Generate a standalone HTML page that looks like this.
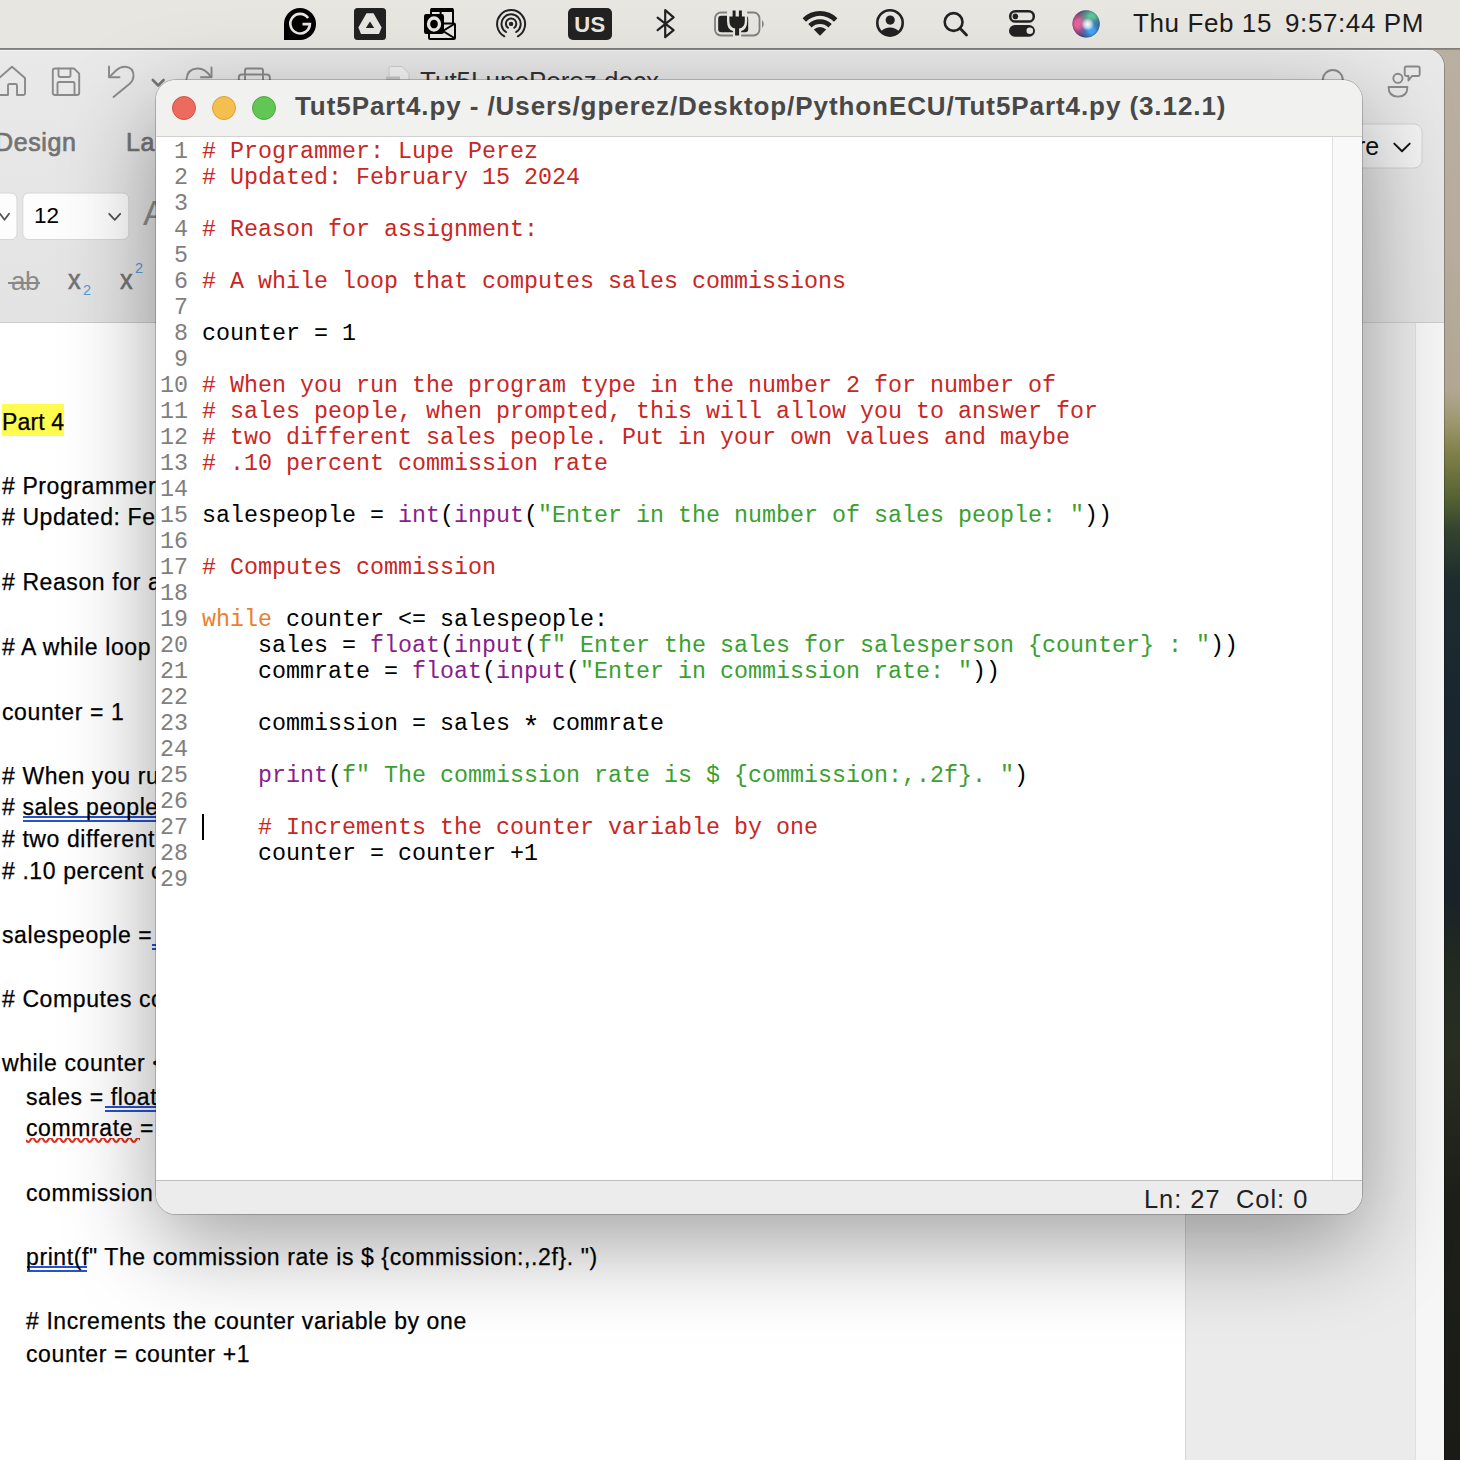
<!DOCTYPE html>
<html><head><meta charset="utf-8">
<style>
html,body{margin:0;padding:0;}
body{width:1460px;height:1460px;overflow:hidden;position:relative;background:#1f2b2c;font-family:"Liberation Sans",sans-serif;}
.a{position:absolute;}
#wall{left:1400px;top:0;width:60px;height:1460px;background:linear-gradient(to bottom,#bab0a2 0px,#b8ad9e 250px,#b2a894 390px,#a09a72 420px,#7f8048 455px,#5a6535 495px,#34442f 530px,#1f2d2e 580px,#1b2730 700px,#1a2329 900px,#222a22 960px,#2a2f22 1050px,#1d1f1a 1200px,#1a1b17 1460px);}
#menubar{left:0;top:0;width:1460px;height:48px;background:#e8e6e1;border-bottom:1px solid #7f7e7a;}
#word{left:-30px;top:49px;width:1474px;height:1411px;background:#fff;border-top-right-radius:18px;overflow:hidden;box-shadow:1px 0 0 rgba(0,0,0,0.22);}
#tb{left:0;top:0;width:1474px;height:273px;background:linear-gradient(to bottom,#e9e9e9,#e3e3e3);border-bottom:1px solid #cdcdcd;}
#docbg{left:1215px;top:274px;width:230px;height:1140px;background:#ebebeb;border-left:1px solid #d4d4d4;}
#docstrip{left:1445px;top:274px;width:29px;height:1140px;background:#f6f6f6;border-left:1px solid #e0e0e0;}
#idle{left:156px;top:80px;width:1206px;height:1134px;border-radius:20px;overflow:hidden;background:#fff;box-shadow:0 0 0 1px rgba(0,0,0,0.2),0 30px 92px rgba(0,0,0,0.37);}
#title{left:0;top:0;width:1206px;height:56px;background:#f1f1f0;border-bottom:1px solid #d2d2d2;}
#code{left:0;top:57px;width:1176px;height:1043px;background:#fff;}
#sbar{left:1176px;top:57px;width:29px;height:1043px;background:#f9f9f9;border-left:1px solid #e2e2e2;}
#status{left:0;top:1100px;width:1206px;height:34px;background:#ececec;border-top:1px solid #bdbdbd;}
.tl{width:22px;height:22px;border-radius:50%;border:1px solid;}
.dl{font-size:23px;line-height:30px;color:#000;white-space:pre;letter-spacing:0.6px;-webkit-text-stroke:0.25px #000;}
.mono{font-family:"Liberation Mono",monospace;font-size:23.33px;line-height:26px;white-space:pre;}
.ln{color:#7f7f7f;}
.c{color:#c9271f;}
.k{color:#ec7f2c;}
.b{color:#8b1d8c;}
.s{color:#3aa02e;}
</style></head><body>
<div id="wall" class="a"></div>
<div id="menubar" class="a">
<svg class="a" style="left:0;top:0;" width="1460" height="48" viewBox="0 0 1460 48">
 <!-- Grammarly -->
 <path d="M284,24 A16,16 0 1 1 300,40 L284,40 Z" fill="#000"/>
 <path d="M308.1,18 A9.8,9.8 0 1 0 309.9,24.1 L302.5,24.1" fill="none" stroke="#e8e6e1" stroke-width="2.6"/>
 <!-- Drive -->
 <rect x="354" y="8" width="32" height="32" rx="3.5" fill="#222"/>
 <path d="M366.5,13.3 L373.5,13.3 L381.6,27.5 L379,34 L361,34 L358.4,27.5 Z" fill="#e8e6e1"/>
 <path d="M370,21.5 L374.2,28 L365.8,28 Z" fill="#222"/>
 <!-- Outlook -->
 <rect x="431" y="9" width="22" height="17" rx="1.2" fill="none" stroke="#000" stroke-width="2"/>
 <rect x="431" y="8" width="22" height="4" fill="#000"/>
 <line x1="440.6" y1="12" x2="440.6" y2="20" stroke="#000" stroke-width="2"/>
 <rect x="429" y="23.5" width="26" height="15.5" rx="1.2" fill="#e8e6e1" stroke="#000" stroke-width="2"/>
 <path d="M455,23.5 L443,31 L455,38.5" fill="none" stroke="#000" stroke-width="2"/>
 <rect x="424" y="14" width="20" height="20" rx="2.2" fill="#000"/>
 <ellipse cx="434" cy="24" rx="5.5" ry="6.0" fill="none" stroke="#e8e6e1" stroke-width="3.3"/>
 <!-- AirDrop -->
 <g fill="none" stroke="#222" stroke-width="2.0" stroke-linecap="round">
  <path d="M504.3,36.3 A14,14 0 1 1 517.9,36.3"/>
  <path d="M506,32 A9.6,9.6 0 1 1 516.2,32"/>
  <path d="M507.9,27.8 A5.2,5.2 0 1 1 514.3,27.8"/>
 </g>
 <circle cx="511.1" cy="23.9" r="2.2" fill="#222"/>
 <!-- US -->
 <rect x="568" y="8" width="44" height="32" rx="5" fill="#222"/>
 <text x="590" y="32.3" text-anchor="middle" font-family="Liberation Sans" font-weight="bold" font-size="22" fill="#e8e6e1" letter-spacing="0.5">US</text>
 <!-- Bluetooth -->
 <path d="M657.6,17.6 L673.6,30.2 L665.2,37.2 L665.2,10.2 L673.6,17.4 L657.6,30.2" fill="none" stroke="#222" stroke-width="2.2" stroke-linejoin="round" stroke-linecap="round"/>
 <!-- Battery -->
 <rect x="715" y="12.5" width="44.5" height="23" rx="6" fill="none" stroke="#808080" stroke-width="1.8"/>
 <path d="M762,20 Q765.5,24 762,28 Z" fill="#808080"/>
 <rect x="718.2" y="15.8" width="30" height="16.5" rx="3" fill="#222"/>
 <path d="M727,10 L747.2,10 L747.2,21 Q747.2,29.5 741.2,31 L741.2,37.5 L733,37.5 L733,31 Q727,29.5 727,21 Z" fill="#e8e6e1"/>
 <path d="M732.6,10.5 L735.6,10.5 L735.6,16.4 L738.9,16.4 L738.9,10.5 L741.9,10.5 L741.9,16.4 L744.8,16.4 L744.8,21 Q744.8,27.6 739.1,28.6 L739.1,35.6 L735.1,35.6 L735.1,28.6 Q729.4,27.6 729.4,21 L729.4,16.4 L732.6,16.4 Z" fill="#222"/>
 <!-- WiFi -->
 <path d="M802.6,18.2 A24.6,24.6 0 0 1 837.4,18.2 L834,21.7 A19.7,19.7 0 0 0 806,21.7 Z" fill="#222"/>
 <path d="M808.2,24 A16.8,16.8 0 0 1 831.8,24 L828.4,27.5 A11.9,11.9 0 0 0 811.6,27.5 Z" fill="#222"/>
 <path d="M813.8,29.6 A8.8,8.8 0 0 1 826.2,29.6 L820,35.8 Z" fill="#222"/>
 <!-- User -->
 <circle cx="890" cy="22.9" r="12.7" fill="none" stroke="#222" stroke-width="2.6"/>
 <circle cx="890.2" cy="20.1" r="4.6" fill="#222"/>
 <path d="M880.6,31.7 Q885,27.5 890,27.5 Q895,27.5 899.4,31.7 A12.7,12.7 0 0 1 880.6,31.7 Z" fill="#222"/>
 <!-- Search -->
 <circle cx="953.6" cy="22" r="8.9" fill="none" stroke="#222" stroke-width="2.6"/>
 <line x1="960.2" y1="28.6" x2="966.5" y2="35" stroke="#222" stroke-width="2.8" stroke-linecap="round"/>
 <!-- Control Center -->
 <rect x="1010.2" y="11.2" width="23.6" height="10.4" rx="5.2" fill="none" stroke="#222" stroke-width="2.5"/>
 <circle cx="1015.4" cy="16.4" r="2.8" fill="#222"/>
 <rect x="1009" y="25" width="26" height="11.8" rx="5.9" fill="#222"/>
 <circle cx="1029.8" cy="30.8" r="3.3" fill="#e8e6e1"/>
 <!-- Siri -->
 <defs>
  <radialGradient id="sg0" cx="0.5" cy="0.5" r="0.5"><stop offset="0" stop-color="#6a6a8a"/><stop offset="0.8" stop-color="#4a4f78"/><stop offset="1" stop-color="#3a3f68"/></radialGradient>
  <radialGradient id="sg1" cx="0.25" cy="0.5" r="0.5"><stop offset="0.3" stop-color="#e8609a"/><stop offset="1" stop-color="#d03070" stop-opacity="0"/></radialGradient>
  <radialGradient id="sg2" cx="0.7" cy="0.25" r="0.5"><stop offset="0.2" stop-color="#5ec49a"/><stop offset="1" stop-color="#3aa88a" stop-opacity="0"/></radialGradient>
  <radialGradient id="sg3" cx="0.7" cy="0.75" r="0.5"><stop offset="0.2" stop-color="#3fa6ee"/><stop offset="1" stop-color="#2050b0" stop-opacity="0"/></radialGradient>
  <radialGradient id="sg4" cx="0.56" cy="0.52" r="0.24"><stop offset="0" stop-color="#ffffff"/><stop offset="0.5" stop-color="#ffffff" stop-opacity="0.7"/><stop offset="1" stop-color="#ffffff" stop-opacity="0"/></radialGradient>
 </defs>
 <circle cx="1086.1" cy="23.8" r="13.6" fill="url(#sg0)"/>
 <circle cx="1086.1" cy="23.8" r="13.6" fill="url(#sg1)"/>
 <circle cx="1086.1" cy="23.8" r="13.6" fill="url(#sg2)"/>
 <circle cx="1086.1" cy="23.8" r="13.6" fill="url(#sg3)"/>
 <circle cx="1086.1" cy="23.8" r="13.6" fill="url(#sg4)"/>
</svg>
<div id="date1" class="a" style="left:1133px;top:7px;font-size:26px;line-height:32px;letter-spacing:0.6px;color:#1c1c1c;white-space:pre;">Thu Feb 15</div>
<div id="date2" class="a" style="left:1285px;top:7px;font-size:26px;line-height:32px;letter-spacing:0.6px;color:#1c1c1c;white-space:pre;">9:57:44 PM</div>
</div>
<div id="word" class="a">
  <div id="tb" class="a"></div>
  <div id="tbc" class="a" style="left:30px;top:-49px;width:1460px;height:330px;"><svg class="a" style="left:0;top:0;" width="1460" height="330" viewBox="0 0 1460 330">
 <g fill="none" stroke="#8a8a8a" stroke-width="1.9" stroke-linejoin="round" stroke-linecap="round">
  <!-- home -->
  <path d="M-2,79 L12,66.8 L25,78 L25,93.5 Q25,95 23.5,95 L17,95 L17,85.5 Q17,84 15.5,84 L9.5,84 Q8,84 8,85.5 L8,95 L-2,95"/>
  <!-- save -->
  <path d="M55,68.5 L74,68.5 L79.2,73.7 L79.2,92.8 Q79.2,95 77,95 L55,95 Q52.8,95 52.8,92.8 L52.8,70.7 Q52.8,68.5 55,68.5 Z"/>
  <path d="M58.5,68.5 L58.5,75.3 Q58.5,77 60.2,77 L68.8,77 Q70.5,77 70.5,75.3 L70.5,68.5"/>
  <path d="M57.5,95 L57.5,83.5 Q57.5,82 59,82 L73,82 Q74.5,82 74.5,83.5 L74.5,95"/>
  <!-- undo -->
  <path d="M109,66.5 L109,77.3 L119.5,77.3"/>
  <path d="M109.5,77 L116,70.5 Q120.5,66.5 125.5,66.8 Q133.5,67.5 133.5,76 Q133.5,80 130,83.5 L113.5,97"/>
  <!-- redo -->
  <path d="M211.5,67.5 L211.5,77.3 L201,77.3"/>
  <path d="M211,77 Q205,68 197,68.5 Q187.5,69 186.5,79"/>
  <!-- print -->
  <path d="M245,80 L245,70.5 Q245,68.5 247,68.5 L261,68.5 Q263,68.5 263,70.5 L263,80"/>
  <path d="M238.8,82 L238.8,77.5 Q238.8,74.5 241.8,74.5 L266.8,74.5 Q269.8,74.5 269.8,77.5 L269.8,82"/>
 </g>
 <path d="M152.8,80 L158.2,85.5 L163.6,80" fill="none" stroke="#777" stroke-width="2.6" stroke-linecap="round" stroke-linejoin="round"/>
 <!-- doc icon -->
 <path d="M389,80 L389,68 Q389,66.5 390.5,66.5 L402,66.5 L409,73.5 L409,80 Z" fill="#f4f4f4" stroke="#d0d0d0" stroke-width="1"/>
 <rect x="386" y="76.5" width="14" height="5" fill="#c9c9c9"/>
 <!-- right icons -->
 <path d="M1322.8,80 A10,10 0 0 1 1342.8,80" fill="none" stroke="#8a8a8a" stroke-width="1.9"/>
 <g fill="none" stroke="#8a8a8a" stroke-width="1.9" stroke-linejoin="round">
  <circle cx="1397.9" cy="78.3" r="4.6"/>
  <path d="M1388.6,87 L1407.4,87 Q1407.4,96.6 1398,96.6 Q1388.6,96.6 1388.6,87 Z"/>
  <path d="M1406.2,66.5 L1418.2,66.5 Q1419.7,66.5 1419.7,68 L1419.7,74.5 Q1419.7,76 1418.2,76 L1412,76 L1408.5,80.5 L1408.5,76 L1406.2,76 Q1404.7,76 1404.7,74.5 L1404.7,68 Q1404.7,66.5 1406.2,66.5 Z"/>
 </g>
 <!-- row 3 boxes -->
 <rect x="-20" y="193" width="37" height="46.5" rx="6" fill="#fdfdfd" stroke="#d6d6d6" stroke-width="1"/>
 <path d="M0,213.8 L4.5,219.8 L9,213.8" fill="none" stroke="#555" stroke-width="1.8" stroke-linecap="round" stroke-linejoin="round"/>
 <rect x="22.8" y="193" width="106" height="46.5" rx="6" fill="#fdfdfd" stroke="#d6d6d6" stroke-width="1"/>
 <path d="M109.2,213.8 L114.7,219.8 L120.2,213.8" fill="none" stroke="#555" stroke-width="1.8" stroke-linecap="round" stroke-linejoin="round"/>
 
 <!-- share button -->
 <rect x="1330" y="124" width="92" height="44" rx="8" fill="#f3f3f3" stroke="#d2d2d2" stroke-width="1"/>
 <path d="M1394.3,143.6 L1402,151.2 L1409.7,143.6" fill="none" stroke="#111" stroke-width="1.9" stroke-linecap="round" stroke-linejoin="round"/>
</svg>
<div class="a" style="left:-5px;top:126px;font-size:25px;line-height:32px;font-weight:normal;-webkit-text-stroke:0.7px #737373;color:#737373;white-space:pre;letter-spacing:0.6px;">Design</div>
<div class="a" style="left:126px;top:126px;font-size:25px;line-height:32px;font-weight:normal;-webkit-text-stroke:0.7px #737373;color:#737373;white-space:pre;letter-spacing:0.6px;">La</div>
<div class="a" style="left:34px;top:202px;font-size:22.5px;line-height:28px;color:#000;white-space:pre;">12</div>
<div class="a" style="left:1357px;top:131px;font-size:25px;line-height:30px;color:#111;white-space:pre;">re</div>
<div class="a" style="left:420px;top:66px;font-size:26px;line-height:30px;color:#333;white-space:pre;">Tut5LupePerez.docx</div>
<div class="a" style="left:11px;top:265.5px;font-size:26px;line-height:30px;color:#8a8a8a;white-space:pre;letter-spacing:-0.5px;">ab</div>
<div class="a" style="left:143px;top:194px;font-size:35px;line-height:38px;color:#8c8c8c;white-space:pre;">A</div>
<div class="a" style="left:8px;top:282px;width:32px;height:1.6px;background:#888;"></div>
<div id="xsub" class="a" style="left:68px;top:264px;font-size:27.5px;line-height:32px;font-weight:normal;-webkit-text-stroke:0.6px #737373;color:#737373;white-space:pre;transform:scaleX(0.92);transform-origin:0 0;">x</div>
<div class="a" style="left:83px;top:281px;font-size:14.5px;line-height:18px;color:#5b9ad8;white-space:pre;">2</div>
<div class="a" style="left:120px;top:264px;font-size:27.5px;line-height:32px;font-weight:normal;-webkit-text-stroke:0.6px #737373;color:#737373;white-space:pre;transform:scaleX(0.92);transform-origin:0 0;">x</div>
<div class="a" style="left:135px;top:259px;font-size:14.5px;line-height:18px;color:#5b9ad8;white-space:pre;">2</div>
</div>
  <div id="docbg" class="a"></div>
  <div id="docstrip" class="a"></div>
</div>
<div class="a" style="left:0;top:49px;width:1460px;height:1px;background:#8d8c88;"></div>
<div class="a" style="left:0;top:50px;width:1428px;height:1px;background:#f3f3f3;"></div>
<div id="doc">
<div class="a" style="left:2px;top:404px;width:62px;height:32px;background:#fffb4f;"></div>
<div class="a" style="left:23px;top:816px;width:140px;height:6px;border-top:2px solid #2552d4;border-bottom:2px solid #2552d4;box-sizing:border-box;"></div>
<div class="a" style="left:105px;top:1106px;width:60px;height:6px;border-top:2px solid #2552d4;border-bottom:2px solid #2552d4;box-sizing:border-box;"></div>
<div class="a" style="left:27px;top:1266px;width:60px;height:6px;border-top:2px solid #2552d4;border-bottom:2px solid #2552d4;box-sizing:border-box;"></div>
<div class="a" style="left:152px;top:944px;width:8px;height:6px;border-top:2px solid #2552d4;border-bottom:2px solid #2552d4;box-sizing:border-box;"></div>
<svg class="a" style="left:26px;top:1138px;" width="114" height="8"><path d="M0,2 Q2.2,6 4.4,2 T8.8,2 T13.2,2 T17.6,2 T22,2 T26.4,2 T30.8,2 T35.2,2 T39.6,2 T44,2 T48.4,2 T52.8,2 T57.2,2 T61.6,2 T66,2 T70.4,2 T74.8,2 T79.2,2 T83.6,2 T88,2 T92.4,2 T96.8,2 T101.2,2 T105.6,2 T110,2 T114.4,2" fill="none" stroke="#e0301e" stroke-width="2.2"/></svg>

<div class="a dl" id="dl0" style="left:2px;top:407.0px;letter-spacing:0.15px;">Part 4</div>
<div class="a dl" id="dl1" style="left:2px;top:470.6px;"># Programmer: Lupe Perez</div>
<div class="a dl" id="dl2" style="left:2px;top:502.3px;"># Updated: February 15 2024</div>
<div class="a dl" id="dl3" style="left:2px;top:566.5px;"># Reason for assignment:</div>
<div class="a dl" id="dl4" style="left:2px;top:631.8px;"># A while loop that computes sales commissions</div>
<div class="a dl" id="dl5" style="left:2px;top:696.6px;">counter = 1</div>
<div class="a dl" id="dl6" style="left:2px;top:760.8px;"># When you run the program type in the number 2 for number of</div>
<div class="a dl" id="dl7" style="left:2px;top:792.2px;"># sales people, when prompted, this will allow you to answer for</div>
<div class="a dl" id="dl8" style="left:2px;top:824.1px;"># two different sales people. Put in your own values and maybe</div>
<div class="a dl" id="dl9" style="left:2px;top:855.8px;"># .10 percent commission rate</div>
<div class="a dl" id="dl10" style="left:2px;top:919.8px;">salespeople = int(input("Enter in the number of sales people: "))</div>
<div class="a dl" id="dl11" style="left:2px;top:984.1px;"># Computes commission</div>
<div class="a dl" id="dl12" style="left:2px;top:1048.3px;">while counter &lt;= salespeople:</div>
<div class="a dl" id="dl13" style="left:26px;top:1082.0px;">sales = float(input(f" Enter the sales for salesperson {counter} : "))</div>
<div class="a dl" id="dl14" style="left:26px;top:1113.2px;">commrate = float(input("Enter in commission rate: "))</div>
<div class="a dl" id="dl15" style="left:26px;top:1178.2px;">commission = sales * commrate</div>
<div class="a dl" id="dl16" style="left:26px;top:1242.0px;">print(f" The commission rate is $ {commission:,.2f}. ")</div>
<div class="a dl" id="dl17" style="left:26px;top:1306.4px;"># Increments the counter variable by one</div>
<div class="a dl" id="dl18" style="left:26px;top:1338.6px;">counter = counter +1</div>
</div>
<div id="idle" class="a">
  <div id="title" class="a">
    <div class="a tl" style="left:16px;top:16px;background:#ed6a5e;border-color:#d25448;"></div>
    <div class="a tl" style="left:56px;top:16px;background:#f5bf4f;border-color:#d6a13a;"></div>
    <div class="a tl" style="left:96px;top:16px;background:#62c655;border-color:#4fa83f;"></div>
    <div id="ttext" class="a" style="left:139px;top:11px;font-weight:bold;font-size:26px;line-height:30px;letter-spacing:0.92px;color:#484848;white-space:nowrap;">Tut5Part4.py - /Users/gperez/Desktop/PythonECU/Tut5Part4.py (3.12.1)</div>
  </div>
  <div id="code" class="a">
  <div class="a mono ln" style="left:4px;top:2px;width:28px;text-align:right;">1
2
3
4
5
6
7
8
9
10
11
12
13
14
15
16
17
18
19
20
21
22
23
24
25
26
27
28
29</div>
  <div class="a mono" style="left:46px;top:2px;color:#000;"><span class="c"># Programmer: Lupe Perez</span>
<span class="c"># Updated: February 15 2024</span>

<span class="c"># Reason for assignment:</span>

<span class="c"># A while loop that computes sales commissions</span>

counter = 1

<span class="c"># When you run the program type in the number 2 for number of</span>
<span class="c"># sales people, when prompted, this will allow you to answer for</span>
<span class="c"># two different sales people. Put in your own values and maybe</span>
<span class="c"># .10 percent commission rate</span>

salespeople = <span class="b">int</span>(<span class="b">input</span>(<span class="s">"Enter in the number of sales people: "</span>))

<span class="c"># Computes commission</span>

<span class="k">while</span> counter &lt;= salespeople:
    sales = <span class="b">float</span>(<span class="b">input</span>(<span class="s">f" Enter the sales for salesperson {counter} : "</span>))
    commrate = <span class="b">float</span>(<span class="b">input</span>(<span class="s">"Enter in commission rate: "</span>))

    commission = sales <span style="display:inline-block;transform:translateY(5px) scale(1.25);">*</span> commrate

    <span class="b">print</span>(<span class="s">f" The commission rate is $ {commission:,.2f}. "</span>)

    <span class="c"># Increments the counter variable by one</span>
    counter = counter +1
</div>
  <div class="a" style="left:46px;top:677px;width:2px;height:26px;background:#000;"></div>
  </div>
  <div id="sbar" class="a"></div>
  <div id="status" class="a"><div id="stext" class="a" style="left:988px;top:3px;font-size:25.4px;line-height:30px;letter-spacing:1px;color:#222;white-space:pre;">Ln: 27</div><div id="stext2" class="a" style="left:1080px;top:3px;font-size:25.4px;line-height:30px;letter-spacing:1px;color:#222;white-space:pre;">Col: 0</div></div>
</div>
</body></html>
